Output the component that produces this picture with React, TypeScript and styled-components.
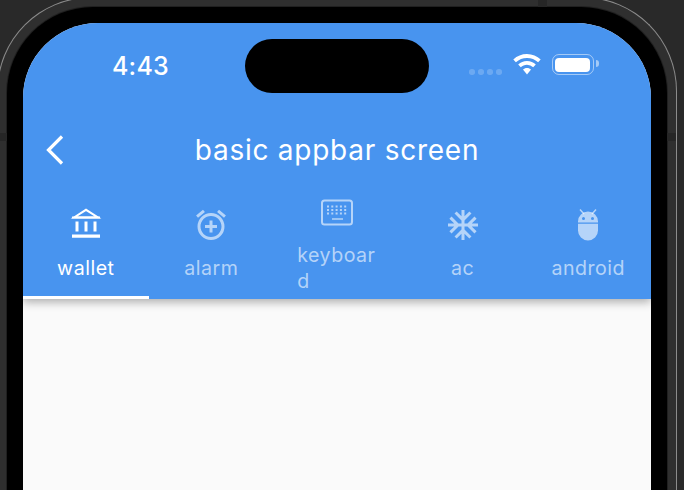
import React from "react";
import styled, { createGlobalStyle } from "styled-components";
import { MdOutlineAlarmAdd, MdAcUnit } from "react-icons/md";

const Global = createGlobalStyle`
  html, body { margin: 0; padding: 0; background: #292929; }
  #root { width: 684px; height: 490px; overflow: hidden; position: relative; }
`;

const Stage = styled.div`
  width: 684px;
  height: 490px;
  overflow: hidden;
  background: #292929;
  font-family: Inter, "Liberation Sans", sans-serif;
`;

const Device = styled.div`
  position: relative;
  box-sizing: border-box;
  width: 680px;
  height: 640px;
  margin: -3px 0 0 -3px;
  padding: 9px;
  border: 1px solid #8c8c8c;
  border-bottom: none;
  border-radius: 94px 94px 0 0;
  background: #2f2f2f;
`;

const Antenna = styled.span<{ $side: "top" | "left" | "right" }>`
  position: absolute;
  background: #262626;
  ${(p) =>
    p.$side === "top"
      ? "top: 0; left: 540px; width: 9px; height: 9px;"
      : p.$side === "left"
      ? "top: 135px; left: 0; width: 9px; height: 8px;"
      : "top: 135px; right: 0; width: 9px; height: 8px;"}
`;

const Bezel = styled.div`
  box-sizing: border-box;
  height: 100%;
  padding: 16px;
  background: #000;
  border-radius: 86px 86px 0 0;
  box-shadow: 0 0 0 1px #202020;
`;

const Screen = styled.div`
  width: 628px;
  height: 100%;
  overflow: hidden;
  display: flex;
  flex-direction: column;
  background: #fafafa;
  border-radius: 75px 75px 0 0;
`;

const Header = styled.header`
  background: #4894ef;
  color: #fff;
  box-shadow: 0 3px 9px rgba(0, 0, 0, 0.32);
  position: relative;
`;

const StatusBar = styled.div`
  height: 86px;
  box-sizing: border-box;
  padding: 16px 0 16px 89px;
  display: flex;
  align-items: center;
`;

const Time = styled.div`
  width: 133px;
  font-size: 25px;
  font-weight: 500;
  line-height: 54px;
  letter-spacing: 0.2px;
`;

const Island = styled.div`
  width: 184px;
  height: 54px;
  border-radius: 27px;
  background: #000;
`;

const StatusRight = styled.div`
  margin-left: 40px;
  display: flex;
  align-items: center;
`;

const Dots = styled.div`
  display: flex;
  gap: 3.5px;
  margin: 12px 11px 0 0;
`;

const Dot = styled.span`
  width: 5.5px;
  height: 5.5px;
  border-radius: 50%;
  background: rgba(255, 255, 255, 0.2);
`;

const Wifi = styled.svg`
  display: block;
  width: 28px;
  height: 21px;
  margin: -3px 11px 0 0;
`;

const Battery = styled.div`
  position: relative;
  box-sizing: border-box;
  width: 42px;
  height: 21px;
  margin-top: -3px;
  padding: 2.5px;
  border: 1.5px solid rgba(255, 255, 255, 0.5);
  border-radius: 7px;
  &::after {
    content: "";
    position: absolute;
    right: -6px;
    top: 5px;
    width: 3px;
    height: 7px;
    border-radius: 0 3px 3px 0;
    background: rgba(255, 255, 255, 0.5);
  }
`;

const BatteryFill = styled.div`
  height: 100%;
  background: #fff;
  border-radius: 4px;
`;

const Toolbar = styled.div`
  height: 82px;
  display: grid;
  grid-template-columns: 1fr auto 1fr;
  align-items: center;
`;

const BackButton = styled.button`
  justify-self: start;
  margin: 0 0 0 22px;
  padding: 0;
  border: 0;
  background: none;
  display: block;
  height: 30px;
`;

const Title = styled.h1`
  margin: 0;
  font-size: 28px;
  font-weight: 400;
  line-height: 34px;
  letter-spacing: 0.75px;
  color: #fff;
`;

const Tabs = styled.nav`
  height: 108px;
  display: grid;
  grid-template-columns: repeat(5, 1fr);
`;

const Tab = styled.div<{ $active?: boolean }>`
  box-sizing: border-box;
  min-width: 0;
  padding: 0 23px;
  display: flex;
  flex-direction: column;
  align-items: center;
  justify-content: center;
  gap: 12px;
  color: ${(p) => (p.$active ? "#fff" : "rgba(255,255,255,0.6)")};
  border-bottom: 3px solid ${(p) => (p.$active ? "#fff" : "transparent")};
  svg {
    display: block;
    width: 36px;
    height: 36px;
    flex: none;
  }
`;

const TabLabel = styled.span`
  font-size: 19.6px;
  line-height: 26px;
  letter-spacing: 0.5px;
  word-break: break-all;
  text-align: left;
`;

const Content = styled.main`
  flex: 1;
`;

const BankIcon = () => (
  <svg viewBox="0 0 36 36" fill="none" stroke="currentColor">
    <path d="M6 10.500 18 2.800 30 10.500z" strokeWidth="2" strokeLinejoin="miter" />
    <path d="M4 10.500h28" strokeWidth="2" />
    <path d="M9 14.500v10M18 14.500v10M27 14.500v10" strokeWidth="3" />
    <path d="M4 29.200h28" strokeWidth="3.200" />
  </svg>
);

const KeyboardIcon = () => (
  <svg viewBox="0 0 36 36" fill="none" stroke="currentColor">
    <rect x="3" y="6.500" width="30" height="24" rx="2.500" strokeWidth="2" />
    <path d="M8 12.500h21M8 16h21M8 19.500h21" strokeWidth="2" strokeDasharray="2 2.300" />
    <path d="M13 25h11" strokeWidth="1.600" />
  </svg>
);

const AndroidIcon = () => (
  <svg viewBox="0 0 36 36" fill="currentColor">
    <path d="M10 2.500 14 7M26 2.500 22 7" stroke="currentColor" strokeWidth="1.500" />
    <path d="M8 15.500v-1a10 10 0 0 1 20 0v1zM13.500 10a1.500 1.500 0 1 0 0 3 1.500 1.500 0 0 0 0-3zm9 0a1.500 1.500 0 1 0 0 3 1.500 1.500 0 0 0 0-3z" fillRule="evenodd" />
    <path d="M8 16.800h20V23.500a10 10 0 0 1-20 0z" />
  </svg>
);

const tabs = [
  { label: "wallet", icon: <BankIcon />, active: true },
  { label: "alarm", icon: <MdOutlineAlarmAdd /> },
  { label: "keyboard", icon: <KeyboardIcon /> },
  { label: "ac", icon: <MdAcUnit /> },
  { label: "android", icon: <AndroidIcon /> },
];

export default function App() {
  return (
    <Stage>
      <Global />
      <Device>
        <Antenna $side="top" />
        <Antenna $side="left" />
        <Antenna $side="right" />
        <Bezel>
          <Screen>
            <Header>
              <StatusBar>
                <Time>4:43</Time>
                <Island />
                <StatusRight>
                  <Dots>
                    <Dot />
                    <Dot />
                    <Dot />
                    <Dot />
                  </Dots>
                  <Wifi viewBox="0 0 28 21" fill="#fff">
                    <path d="M14 0c5.300 0 10.100 2.100 13.700 5.500l-2.600 2.800A16.100 16.100 0 0 0 14 3.900 16.100 16.100 0 0 0 2.900 8.300L.3 5.500A19.900 19.900 0 0 1 14 0z" />
                    <path d="M14 7c3.400 0 6.500 1.300 8.800 3.500l-2.600 2.800A9.100 9.100 0 0 0 14 10.800c-2.400 0-4.600.9-6.200 2.500l-2.600-2.800A12.700 12.700 0 0 1 14 7z" />
                    <path d="M14 14c1.600 0 3 .6 4 1.600L14 20.500l-4-4.900c1-1 2.400-1.600 4-1.600z" />
                  </Wifi>
                  <Battery>
                    <BatteryFill />
                  </Battery>
                </StatusRight>
              </StatusBar>
              <Toolbar>
                <BackButton aria-label="back">
                  <svg width="20" height="30" viewBox="0 0 20 30" fill="none" stroke="#fff" strokeWidth="3.2">
                    <path d="M17 1.500 3.500 15 17 28.500" />
                  </svg>
                </BackButton>
                <Title>basic appbar screen</Title>
              </Toolbar>
              <Tabs>
                {tabs.map((t) => (
                  <Tab key={t.label} $active={t.active}>
                    {t.icon}
                    <TabLabel>{t.label}</TabLabel>
                  </Tab>
                ))}
              </Tabs>
            </Header>
            <Content />
          </Screen>
        </Bezel>
      </Device>
    </Stage>
  );
}
